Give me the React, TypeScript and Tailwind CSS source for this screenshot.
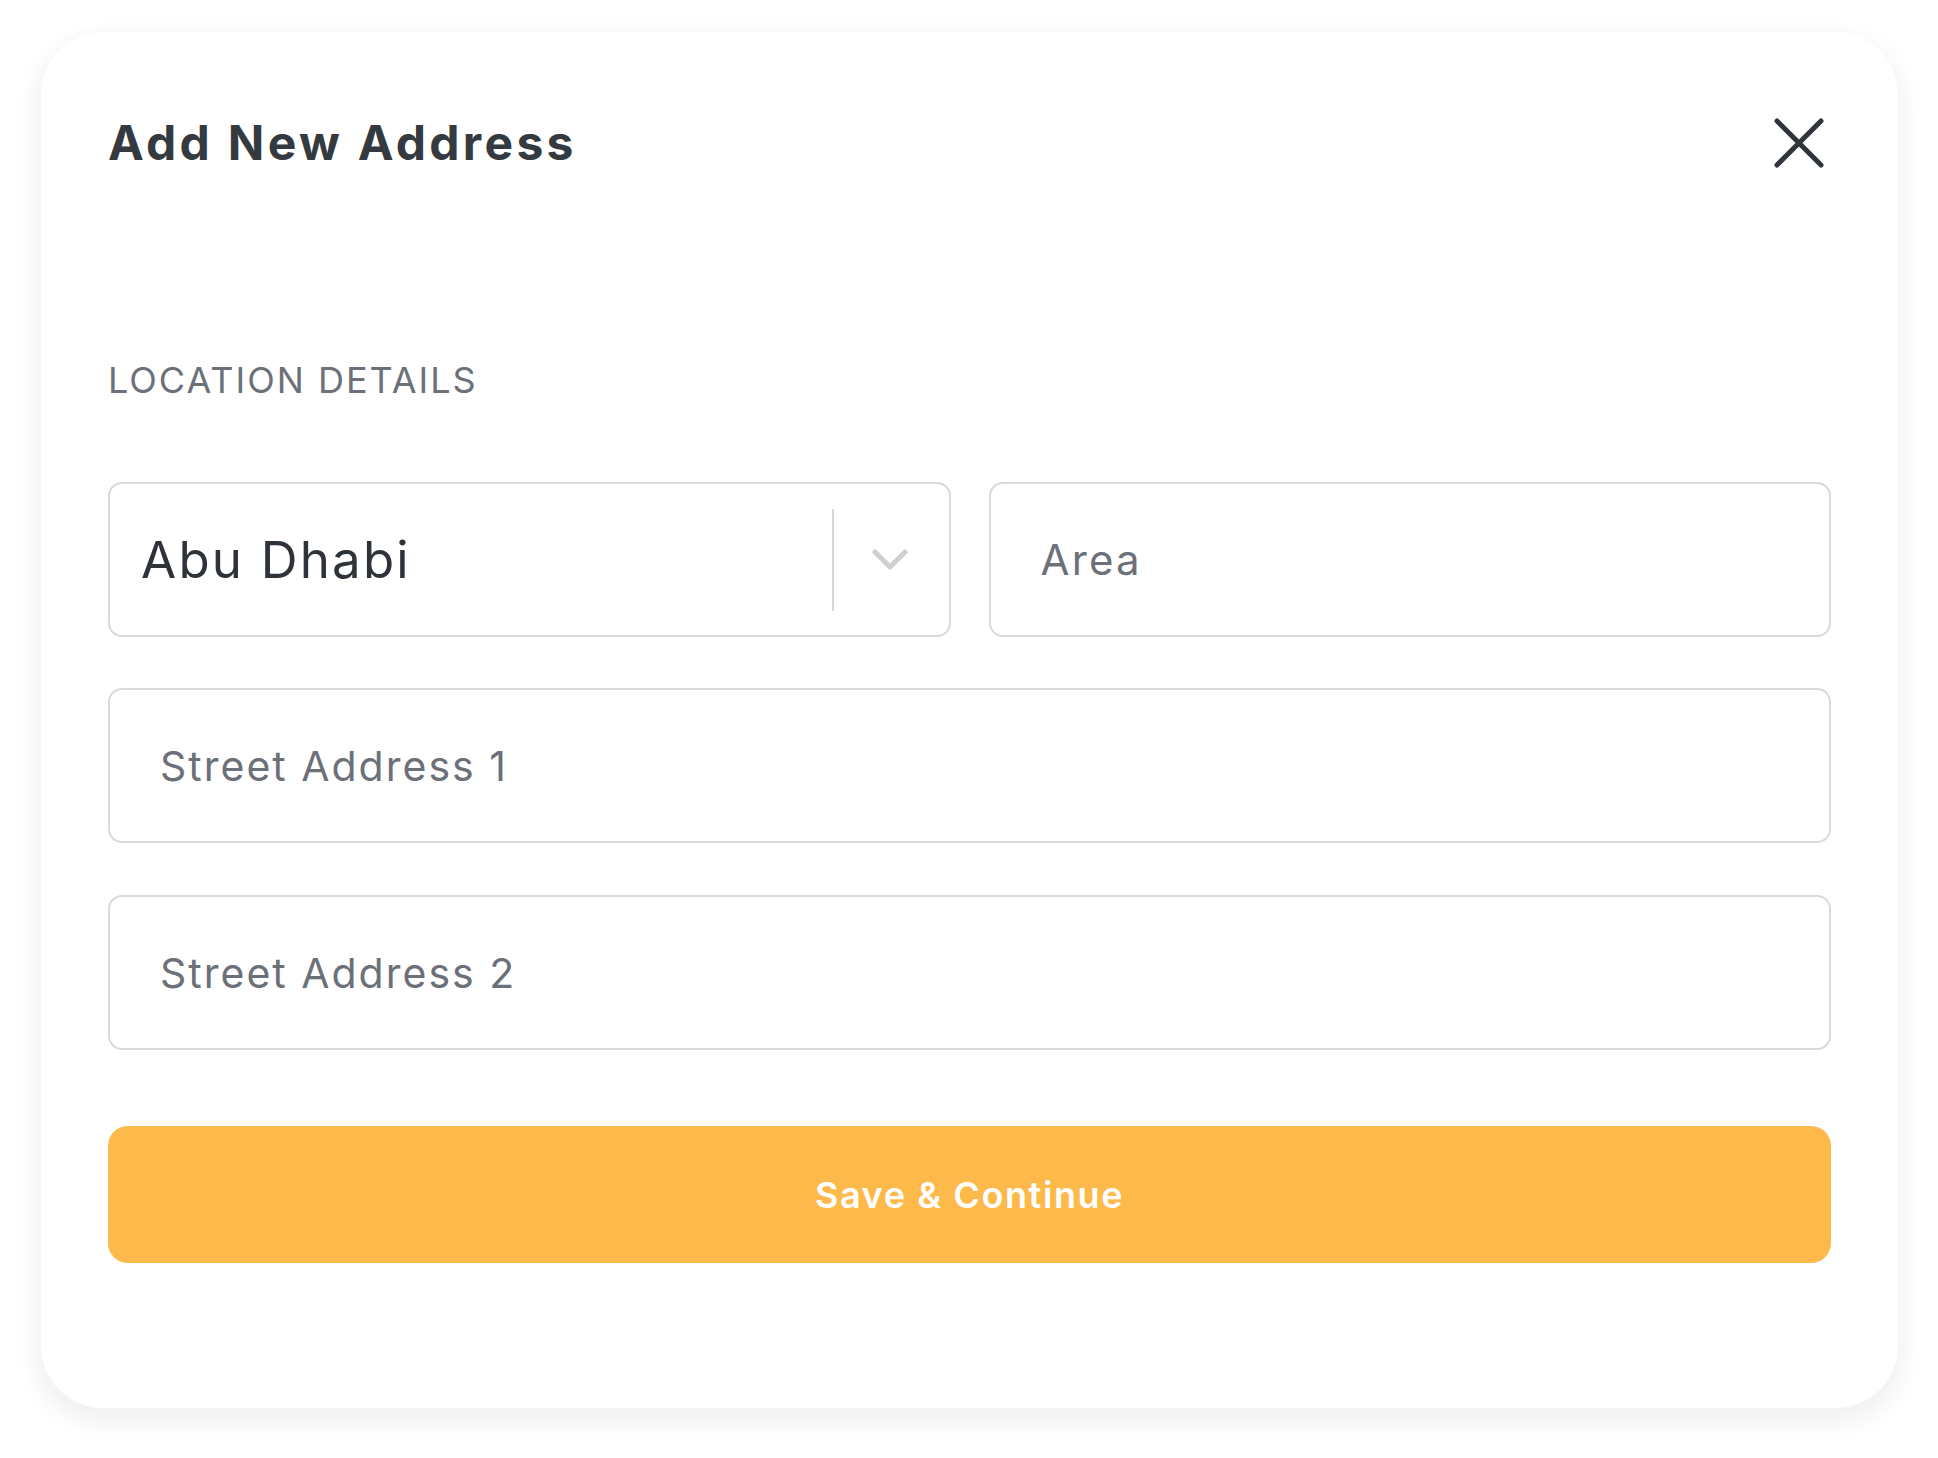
import React from "react";

function CloseIcon() {
  return (
    <svg width="50" height="50" viewBox="0 0 50 50" fill="none">
      <path d="M3 3 L47 47 M47 3 L3 47" stroke="#2f353b" strokeWidth="5" strokeLinecap="round" />
    </svg>
  );
}

function Chevron() {
  return (
    <svg width="36" height="21" viewBox="0 0 36 21" fill="none">
      <path d="M3 3 L18 18 L33 3" stroke="#cfcfcf" strokeWidth="5" strokeLinecap="round" strokeLinejoin="round" />
    </svg>
  );
}

export default function App() {
  return (
    <div className="min-h-[1458px] w-[1938px] bg-white font-[Inter,sans-serif]">
      <div className="pl-[41px] pt-[32px]">
        <div className="w-[1857px] h-[1376px] rounded-[62px] bg-white shadow-[0_10px_22px_6px_rgba(0,0,0,0.055)] px-[67px] pt-[86px] flex flex-col">
          <div className="h-[50px] flex items-center justify-between">
            <h1 className="text-[48px] leading-none font-bold text-[#343a40] tracking-[3.3px]">Add New Address</h1>
            <div className="mr-[7px]">
              <CloseIcon />
            </div>
          </div>

          <div className="mt-[194px] text-[36px] leading-none text-[#6c7179] tracking-[2px]">LOCATION DETAILS</div>

          <div className="mt-[84px] grid grid-cols-2 gap-[38px]">
            <div className="h-[155px] rounded-[14px] border-2 border-[#d9d9d9] flex items-center pl-[31px]">
              <span className="flex-1 text-[51px] leading-none text-[#2d3339] tracking-[2.2px]">Abu Dhabi</span>
              <div className="w-[2px] h-[102px] bg-[#d6d6d6]" />
              <div className="w-[115px] flex items-center justify-center pr-[2px]">
                <Chevron />
              </div>
            </div>
            <div className="h-[155px] rounded-[14px] border-2 border-[#d9d9d9] flex items-center pl-[50px]">
              <input
                className="w-full bg-transparent outline-none text-[42px] leading-none text-[#2d3339] placeholder:text-[#6b7079] tracking-[2.2px]"
                placeholder="Area"
              />
            </div>
          </div>

          <div className="mt-[51px] h-[155px] rounded-[14px] border-2 border-[#d9d9d9] flex items-center pl-[50px]">
            <input
              className="w-full bg-transparent outline-none text-[41px] leading-none text-[#2d3339] placeholder:text-[#6b7079] tracking-[2px]"
              placeholder="Street Address 1"
            />
          </div>

          <div className="mt-[52px] h-[155px] rounded-[14px] border-2 border-[#d9d9d9] flex items-center pl-[50px]">
            <input
              className="w-full bg-transparent outline-none text-[41px] leading-none text-[#2d3339] placeholder:text-[#6b7079] tracking-[2px]"
              placeholder="Street Address 2"
            />
          </div>

          <button className="mt-[76px] h-[137px] w-full rounded-[20px] bg-[#fdb94a] text-white text-[36px] font-semibold leading-none tracking-[1.6px]">
            Save &amp; Continue
          </button>
        </div>
      </div>
    </div>
  );
}
